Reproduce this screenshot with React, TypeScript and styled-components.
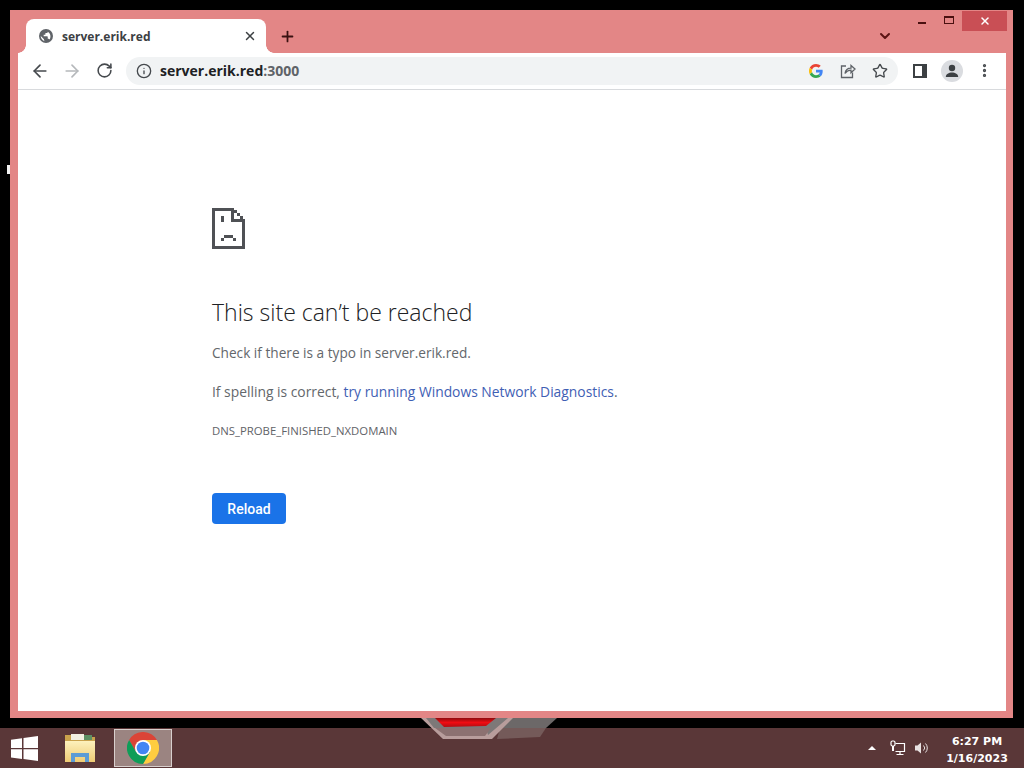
import { createGlobalStyle, styled } from "styled-components";
import {
  ArrowLeft,
  ArrowRight,
  ChevronDown,
  EllipsisVertical,
  Info,
  Plus,
  RotateCw,
  Star,
  X,
} from "lucide-react";

const GlobalStyle = createGlobalStyle`
  html, body {
    margin: 0;
    padding: 0;
    background: #000;
  }
  * {
    box-sizing: border-box;
  }
`;

const Desktop = styled.div`
  position: relative;
  width: 1024px;
  height: 768px;
  overflow: hidden;
  display: flex;
  flex-direction: column;
  background: #000;
  font-family: "Open Sans", "Liberation Sans", sans-serif;
`;

const Speck = styled.div`
  position: absolute;
  left: 7px;
  top: 165px;
  width: 3px;
  height: 9px;
  background: #f2f2f2;
`;

const Wallpaper = styled.svg`
  position: absolute;
  left: 420px;
  top: 717px;
  z-index: 2;
`;

const Window = styled.div`
  margin: 10px 11px 0 10px;
  height: 708px;
  flex: none;
  display: flex;
  flex-direction: column;
  padding: 0 7px 7px 8px;
  background: #e38686;
`;

const TitleBar = styled.div`
  position: relative;
  height: 43px;
  flex: none;
  display: flex;
  align-items: flex-end;
  padding-left: 8px;
`;

const Tab = styled.div`
  position: relative;
  width: 240px;
  height: 34px;
  display: flex;
  align-items: center;
  padding: 0 9px 0 13px;
  background: #fff;
  border-radius: 8px 8px 0 0;
  color: #3c4043;
  &::before,
  &::after {
    content: "";
    position: absolute;
    bottom: 0;
    width: 8px;
    height: 8px;
    background: radial-gradient(circle at var(--cx) 0, #e38686 7.5px, #fff 8px);
  }
  &::before {
    --cx: 0;
    left: -8px;
  }
  &::after {
    --cx: 100%;
    right: -8px;
  }
`;

const TabTitle = styled.span`
  flex: 1;
  margin-left: 9px;
  font-size: 12px;
  font-weight: 700;
  color: #3c4043;
`;

const TabClose = styled(X)`
  width: 14px;
  height: 14px;
  color: #3c4043;
`;

const NewTab = styled(Plus)`
  width: 17px;
  height: 17px;
  margin: 0 0 8px 13px;
  color: #3a1010;
`;

const TabMenu = styled(ChevronDown)`
  position: absolute;
  left: 859px;
  top: 18px;
  width: 16px;
  height: 16px;
  color: #5c1414;
`;

const WindowControls = styled.div`
  position: absolute;
  right: -1px;
  top: 1px;
  display: flex;
  align-items: flex-start;
`;

const CaptionIcon = styled.div`
  width: 27px;
  height: 20px;
  display: flex;
  align-items: center;
  justify-content: center;
`;

const MinimizeMark = styled.div`
  width: 8px;
  height: 2px;
  margin-top: 4px;
  background: #4a1010;
`;

const MaximizeMark = styled.div`
  width: 10px;
  height: 8px;
  margin-top: -2px;
  border: 1px solid #4a1010;
  border-top-width: 2px;
`;

const CloseButton = styled.div`
  width: 45px;
  height: 20px;
  display: flex;
  align-items: center;
  justify-content: center;
  background: #c94f55;
  color: #fff;
`;

const Toolbar = styled.div`
  height: 37px;
  flex: none;
  display: flex;
  align-items: center;
  padding: 0 7px 1px 6px;
  background: #fff;
  border-bottom: 1px solid #d8dadd;
`;

const NavButton = styled.div<{ $width?: number }>`
  width: ${({ $width }) => $width ?? 32}px;
  display: flex;
  align-items: center;
  justify-content: center;
  flex: none;
`;

const Omnibox = styled.div`
  width: 772px;
  height: 28px;
  margin: 0 4px 0 6px;
  flex: none;
  display: flex;
  align-items: center;
  padding: 0 2px 0 10px;
  background: #f1f3f4;
  border-radius: 14px;
`;

const Url = styled.div`
  flex: 1;
  margin-left: 8px;
  font-size: 14px;
  font-weight: 700;
  color: #202124;
`;

const UrlPort = styled.span`
  color: #5f6368;
`;

const OmniIcon = styled.div`
  width: 32px;
  display: flex;
  justify-content: center;
`;

const Avatar = styled.div`
  width: 22px;
  height: 22px;
  display: flex;
  align-items: center;
  justify-content: center;
  border-radius: 50%;
  background: #dadce0;
`;

const Page = styled.main`
  flex: 1;
  display: flex;
  flex-direction: column;
  align-items: flex-start;
  padding: 118px 0 0 194px;
  background: #fff;
  color: #63676b;
`;

const SadPage = styled.svg`
  display: block;
  flex: none;
`;

const Heading = styled.h1`
  margin: 46px 0 0;
  font-size: 23px;
  line-height: 34px;
  font-weight: 300;
  color: #202124;
`;

const Paragraph = styled.p`
  margin: 0;
  line-height: 20px;
  height: 20px;
`;

const FirstParagraph = styled(Paragraph)`
  margin-top: 14px;
  font-size: 13.65px;
`;

const SecondParagraph = styled(Paragraph)`
  margin-top: 19px;
  font-size: 13.85px;
`;

const Link = styled.a`
  color: #3f60b4;
`;

const ErrorCode = styled.div`
  margin-top: 21px;
  font-size: 11.35px;
  line-height: 16px;
  color: #5f6368;
`;

const ReloadButton = styled.button`
  margin-top: 54px;
  width: 74px;
  height: 31px;
  padding: 0;
  border: none;
  border-radius: 4px;
  background: #1a73e8;
  color: #fff;
  font-family: Roboto, "Liberation Sans", sans-serif;
  font-size: 14px;
  font-weight: 500;
`;

const Taskbar = styled.div`
  height: 40px;
  margin-top: 10px;
  flex: none;
  display: flex;
  align-items: center;
  background: #5a3738;
`;

const StartButton = styled.div`
  width: 47px;
  display: flex;
  justify-content: flex-end;
  padding-right: 9px;
`;

const FolderSlot = styled.div`
  width: 67px;
  display: flex;
  justify-content: center;
  padding-right: 1px;
`;

const ActiveApp = styled.div`
  width: 58px;
  height: 38px;
  display: flex;
  align-items: center;
  justify-content: center;
  background: #9b8481;
  border: 1px solid #d8cfcd;
`;

const Tray = styled.div`
  margin-left: auto;
  display: flex;
  align-items: center;
  color: #fff;
`;

const TrayArrow = styled.div`
  width: 0;
  height: 0;
  margin-right: 10px;
  border-left: 4px solid transparent;
  border-right: 4px solid transparent;
  border-bottom: 4px solid #fff;
`;

const TrayIcon = styled.div`
  width: 24px;
  display: flex;
  justify-content: center;
`;

const Clock = styled.div`
  width: 66px;
  margin: 3px 14px 0 10px;
  text-align: center;
  font-family: "DejaVu Sans", sans-serif;
  font-size: 11px;
  font-weight: 700;
  line-height: 17px;
  color: #fff;
  white-space: nowrap;
`;

const GoogleG = () => (
  <svg width="14" height="14" viewBox="0 0 48 48">
    <path fill="#EA4335" d="M24 9.5c3.5 0 6.700 1.200 9.200 3.600l6.900-6.900C35.900 2.400 30.500 0 24 0 14.600 0 6.500 5.400 2.600 13.200l8 6.200C12.500 13.700 17.800 9.500 24 9.500z" />
    <path fill="#4285F4" d="M46.900 24.500c0-1.600-.1-3.100-.4-4.500H24v9h12.900c-.6 3-2.300 5.500-4.800 7.200l7.700 6c4.500-4.200 7.100-10.300 7.100-17.700z" />
    <path fill="#FBBC05" d="M10.500 28.600c-.5-1.500-.8-3-.8-4.600s.3-3.100.8-4.600l-8-6.200C.9 16.500 0 20.100 0 24s.9 7.500 2.600 10.800l7.900-6.200z" />
    <path fill="#34A853" d="M24 48c6.500 0 11.900-2.100 15.900-5.800l-7.700-6c-2.200 1.400-4.900 2.300-8.200 2.300-6.200 0-11.500-4.200-13.400-9.900l-8 6.200C6.500 42.600 14.600 48 24 48z" />
  </svg>
);

const ShareIcon = () => (
  <svg width="16" height="16" viewBox="0 0 16 16" fill="none" stroke="#5f6368" strokeWidth="1.300">
    <path d="M6 3H1.500v11.500H12.500V9.500" />
    <path d="M5 10.500C5.500 7 8 5.200 11 5.200V2.500L15 6l-4 3.800V7.200C8.500 7.200 6.500 8.300 5 10.500z" />
  </svg>
);

const SidePanelIcon = () => (
  <svg width="14" height="14" viewBox="0 0 14 14">
    <path fill="#3c4043" d="M0 0h14v14H0z" />
    <path fill="#fff" d="M2 2h7v10H2z" />
  </svg>
);

const PersonIcon = () => (
  <svg width="16" height="16" viewBox="0 0 16 16" fill="#3c4043">
    <circle cx="8" cy="5" r="3.200" />
    <path d="M1.800 14c0-3 3-4.500 6.200-4.500s6.200 1.500 6.200 4.500z" />
  </svg>
);

// pixel art sad page, same blocky steps as the chrome one
const SadPageIcon = () => (
  <SadPage width="33" height="41" viewBox="0 0 33 41" fill="#4f5155" shapeRendering="crispEdges">
    <path d="M0 0h19v3H3v35h27V14h3v27H0z" />
    <path d="M19 0h3v11h11v3H19z" />
    <path d="M22 2h3v3h-3zM25 5h3v3h-3zM28 8h3v3h-3z" />
    <path d="M9 8h3v6H9z" />
    <path d="M12 27h9v3H12zM9 30h3v3H9zM21 30h3v3h-3z" />
  </SadPage>
);

const WindowsLogo = () => (
  <svg width="27" height="25" viewBox="0 0 27 25" fill="#fff">
    <path d="M0 3.700 11 2.200V12H0zM12.500 2 27 0v12H12.500zM0 13.200h11V23L0 21.400zM12.500 13.200H27V25l-14.500-2z" />
  </svg>
);

const FolderIcon = () => (
  <svg width="32" height="32" viewBox="0 0 32 32">
    <defs>
      <linearGradient id="folderFront" x1="0" y1="0" x2="0" y2="1">
        <stop offset="0" stopColor="#fdf1bd" />
        <stop offset="1" stopColor="#eecb74" />
      </linearGradient>
    </defs>
    <path fill="#c9a24c" d="M1 3h12l2 2h16v25H1z" />
    <path fill="#f3f0e2" d="M7 2h13v6H7z" />
    <path fill="#5d8f64" d="M20 3h8v5h-8z" />
    <path fill="url(#folderFront)" d="M1 9h30v21H1z" />
    <path fill="#5b9bd5" d="M7 30v-9h18v9h-4v-5H11v5z" />
  </svg>
);

const ChromeLogo = () => (
  <svg width="32" height="32" viewBox="0 0 48 48">
    <path fill="#db4437" d="M44.800 12H24L13.600 30 3.200 12A24 24 0 0 1 44.800 12z" />
    <path fill="#ffcd40" d="M44.800 12A24 24 0 0 1 24 48L34.400 30 24 12z" />
    <path fill="#0f9d58" d="M24 48A24 24 0 0 1 3.200 12L13.600 30H34.400z" />
    <circle cx="24" cy="24" r="12" fill="#fff" />
    <circle cx="24" cy="24" r="9.500" fill="#4285f4" />
  </svg>
);

const NetworkIcon = () => (
  <svg width="16" height="16" viewBox="0 0 16 16" fill="none" stroke="#fff" strokeWidth="1.200">
    <path d="M5.500 3.500h9v8h-9M10 11.500V14M6.500 14.500h7" />
    <rect x="1" y="1" width="4" height="5" rx="1.500" fill="#5a3738" />
    <path d="M3 6v5" strokeWidth="2" />
  </svg>
);

const SpeakerIcon = () => (
  <svg width="16" height="16" viewBox="0 0 16 16" fill="none" stroke="#e8e2e2" strokeWidth="1">
    <path fill="#e8e2e2" stroke="none" d="M1 5.500h2.500L7 2.500v11l-3.500-3H1z" />
    <path d="M9.500 5.500a3.500 3.500 0 0 1 0 5M11.500 3.500a6.500 6.500 0 0 1 0 9" />
  </svg>
);

const WallpaperLogo = () => (
  <Wallpaper width="140" height="25" viewBox="0 0 140 25">
    <defs>
      <linearGradient id="wallRed" x1="0" y1="0" x2="0" y2="1">
        <stop offset="0" stopColor="#8e0a0e" />
        <stop offset="0.5" stopColor="#f00c12" />
        <stop offset="1" stopColor="#b30d12" />
      </linearGradient>
    </defs>
    <path fill="#6c6868" d="M92 1h45l-11 10H80z" />
    <path fill="#745a59" d="M80 11h46l-6 9-43 2z" />
    <path fill="#b89d9c" d="M1 1h92L72 22H23z" />
    <path fill="#7d7878" d="M6 1h82L68 18 66 11H14z" />
    <path fill="#8c7171" d="M15 11h56l-6 8H26z" />
    <path fill="url(#wallRed)" d="M15 1h61L66 9 24 10z" />
  </Wallpaper>
);

export default function App() {
  return (
    <Desktop>
      <GlobalStyle />
      <Speck />
      <Window>
        <TitleBar>
          <Tab>
            <svg width="14" height="14" viewBox="0 0 24 24">
              <circle cx="12" cy="12" r="12" fill="#5f6368" />
              <path fill="#fff" d="M11 21c-4-.5-8-4-8-9l5.500 5.500V19c0 1 1.500 2 2.500 2zM18 18c-.3-.8-1-1.500-2-1.500h-1v-3c0-.5-.5-1-1-1H8V10h2c.5 0 1-.5 1-1V7h2c1 0 2-1 2-2v-.5c5 2.500 6 9.500 3 13.500z" />
            </svg>
            <TabTitle>server.erik.red</TabTitle>
            <TabClose strokeWidth={2.5} />
          </Tab>
          <NewTab strokeWidth={2.5} />
          <TabMenu strokeWidth={3} />
          <WindowControls>
            <CaptionIcon>
              <MinimizeMark />
            </CaptionIcon>
            <CaptionIcon>
              <MaximizeMark />
            </CaptionIcon>
            <CloseButton>
              <X size={12} strokeWidth={3} />
            </CloseButton>
          </WindowControls>
        </TitleBar>
        <Toolbar>
          <NavButton>
            <ArrowLeft size={20} color="#45494d" strokeWidth={2} />
          </NavButton>
          <NavButton>
            <ArrowRight size={20} color="#b5b8bb" strokeWidth={2} />
          </NavButton>
          <NavButton>
            <RotateCw size={17} color="#45494d" strokeWidth={2.2} />
          </NavButton>
          <Omnibox>
            <Info size={16} color="#45494d" strokeWidth={2} />
            <Url>
              server.erik.red<UrlPort>:3000</UrlPort>
            </Url>
            <OmniIcon>
              <GoogleG />
            </OmniIcon>
            <OmniIcon>
              <ShareIcon />
            </OmniIcon>
            <OmniIcon>
              <Star size={16} color="#45494d" strokeWidth={2} />
            </OmniIcon>
          </Omnibox>
          <NavButton $width={36}>
            <SidePanelIcon />
          </NavButton>
          <NavButton $width={28}>
            <Avatar>
              <PersonIcon />
            </Avatar>
          </NavButton>
          <NavButton $width={36}>
            <EllipsisVertical size={17} color="#45494d" strokeWidth={2.6} />
          </NavButton>
        </Toolbar>
        <Page>
          <SadPageIcon />
          <Heading>This site can’t be reached</Heading>
          <FirstParagraph>Check if there is a typo in server.erik.red.</FirstParagraph>
          <SecondParagraph>
            If spelling is correct, <Link>try running Windows Network Diagnostics</Link>.
          </SecondParagraph>
          <ErrorCode>DNS_PROBE_FINISHED_NXDOMAIN</ErrorCode>
          <ReloadButton>Reload</ReloadButton>
        </Page>
      </Window>
      <Taskbar>
        <StartButton>
          <WindowsLogo />
        </StartButton>
        <FolderSlot>
          <FolderIcon />
        </FolderSlot>
        <ActiveApp>
          <ChromeLogo />
        </ActiveApp>
        <Tray>
          <TrayArrow />
          <TrayIcon>
            <NetworkIcon />
          </TrayIcon>
          <TrayIcon>
            <SpeakerIcon />
          </TrayIcon>
          <Clock>
            6:27 PM
            <br />
            1/16/2023
          </Clock>
        </Tray>
      </Taskbar>
      <WallpaperLogo />
    </Desktop>
  );
}
